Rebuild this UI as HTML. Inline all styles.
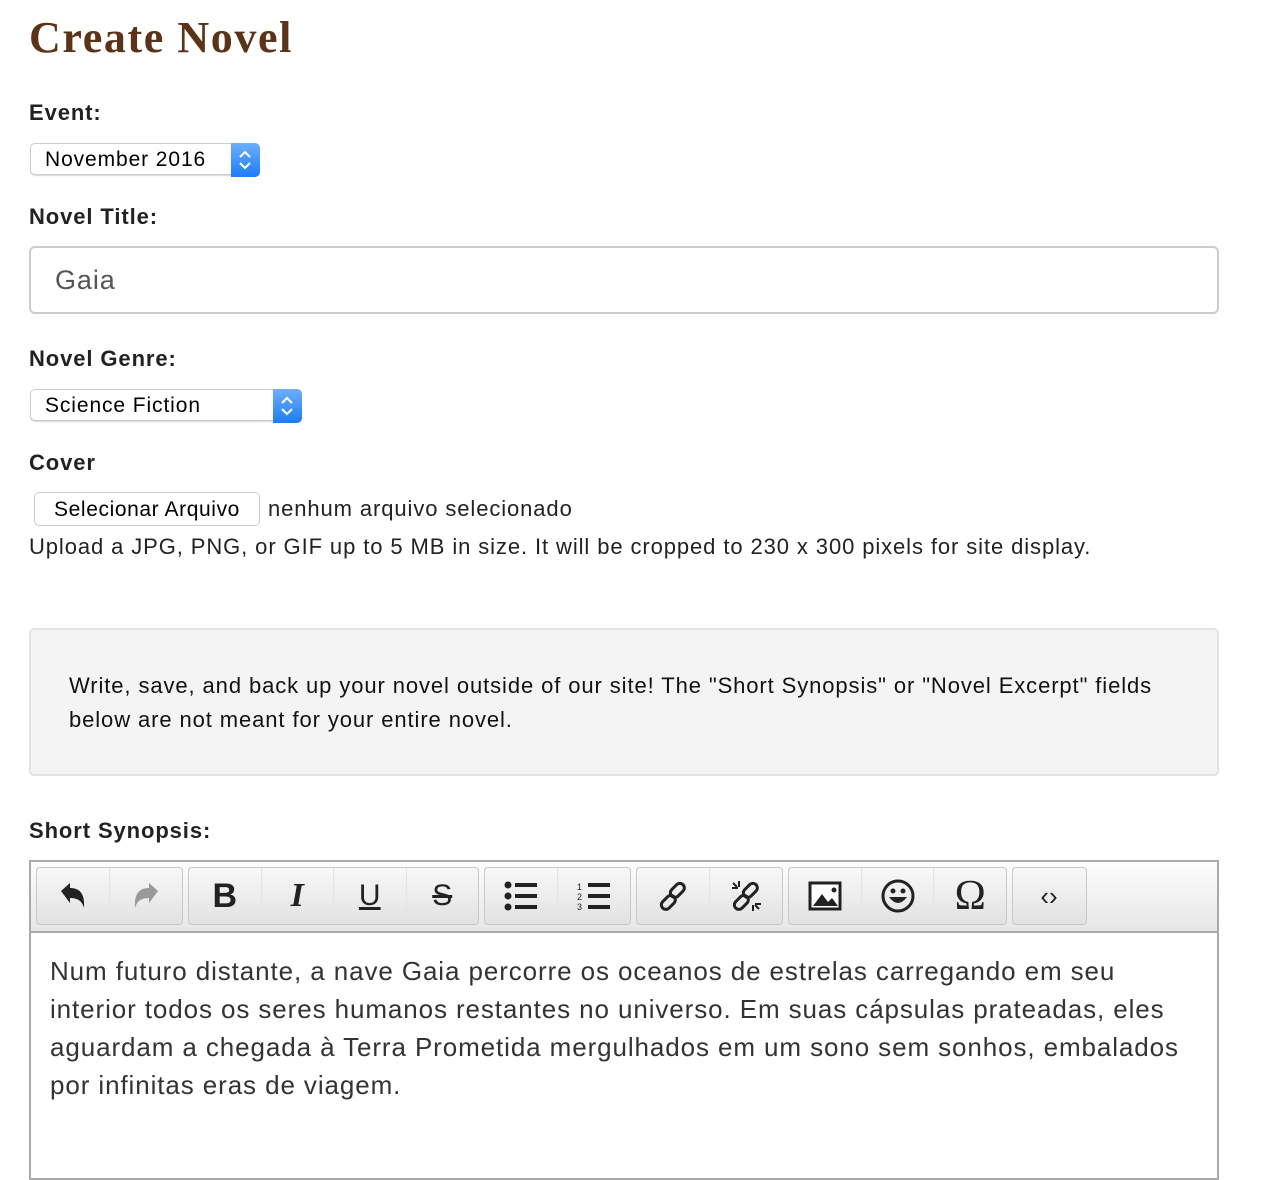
<!DOCTYPE html>
<html><head><style>
body{margin:0;background:#fff;font-family:"Liberation Sans",Arial,sans-serif;color:#222;width:1264px;height:1140px;overflow:hidden;position:relative;letter-spacing:0.9px}
.a{position:absolute}
h1{position:absolute;left:29px;top:12px;margin:0;font-family:"Liberation Serif",serif;font-weight:bold;font-size:44px;letter-spacing:1.6px;color:#5b3318}
.lbl{position:absolute;left:29px;font-weight:bold;font-size:22px;color:#222}
.sel{position:absolute;height:32px;border:1px solid #ccc;border-radius:5px;background:#fff;box-shadow:0 1px 1px rgba(0,0,0,.15);font-size:21px;line-height:32px;padding-left:14px;box-sizing:border-box;color:#000}
.sel .ar{position:absolute;right:-1px;top:-1px;width:29px;height:34px;background:linear-gradient(#6eaefc,#1c7cf8);border-radius:0 5px 5px 0}
.tb{position:absolute;top:867px;height:58px;border:1px solid #c8c8c8;border-radius:4px;background:linear-gradient(#f8f8f8,#e2e2e2);box-sizing:border-box;display:flex;letter-spacing:0}
.tb div{width:72px;height:56px;border-right:1px solid #e4e4e4;display:flex;align-items:center;justify-content:center;font-size:34px;color:#222}
.tb div:last-child{border-right:none}
</style></head><body>
<h1>Create Novel</h1>
<div class="lbl" style="top:100px">Event:</div>
<div class="sel" style="left:30px;top:143px;width:230px">November 2016<div class="ar"><svg width="29" height="34"><path d="M9 14l5-5 5 5M9 20l5 5 5-5" stroke="#fff" stroke-width="2" fill="none"/></svg></div></div>
<div class="lbl" style="top:204px">Novel Title:</div>
<div class="a" style="left:29px;top:246px;width:1190px;height:68px;border:2px solid #ccc;border-radius:6px;box-sizing:border-box;font-size:27px;line-height:64px;padding-left:24px;color:#555">Gaia</div>
<div class="lbl" style="top:346px">Novel Genre:</div>
<div class="sel" style="left:30px;top:389px;width:272px">Science Fiction<div class="ar"><svg width="29" height="34"><path d="M9 14l5-5 5 5M9 20l5 5 5-5" stroke="#fff" stroke-width="2" fill="none"/></svg></div></div>
<div class="lbl" style="top:450px">Cover</div>
<div class="a" style="left:34px;top:492px;width:226px;height:34px;border:1px solid #ccc;border-radius:5px;box-sizing:border-box;font-size:21px;line-height:34px;text-align:center;color:#000;letter-spacing:0.6px">Selecionar Arquivo</div>
<div class="a" style="left:268px;top:496px;font-size:22px;color:#222">nenhum arquivo selecionado</div>
<div class="a" style="left:29px;top:534px;font-size:22px;color:#222">Upload a JPG, PNG, or GIF up to 5 MB in size. It will be cropped to 230 x 300 pixels for site display.</div>
<div class="a" style="left:29px;top:628px;width:1190px;height:148px;border:2px solid #e3e3e3;border-radius:5px;background:#f4f4f4;box-sizing:border-box;padding:39px 50px 0 38px;font-size:22px;line-height:34px;color:#111">Write, save, and back up your novel outside of our site! The "Short Synopsis" or "Novel Excerpt" fields below are not meant for your entire novel.</div>
<div class="lbl" style="top:818px">Short Synopsis:</div>
<div class="a" style="left:29px;top:860px;width:1190px;height:320px;border:2px solid #aaa;box-sizing:border-box;background:#fff"></div>
<div class="a" style="left:31px;top:862px;width:1186px;height:69px;background:linear-gradient(#fdfdfd,#e6e6e6);border-bottom:2px solid #aaa"></div>
<div class="tb" style="left:36px;width:147px"><div><svg width="30" height="30"><path d="M3 10l9-8v5c10 0 15 6 14 20-2-7-6-10-14-10v5z" fill="#222"/></svg></div><div><svg width="30" height="30"><path d="M27 10l-9-8v5c-10 0-15 6-14 20 2-7 6-10 14-10v5z" fill="#999"/></svg></div></div>
<div class="tb" style="left:188px;width:291px"><div style="font-weight:bold">B</div><div style="font-family:'Liberation Serif';font-style:italic;font-weight:bold">I</div><div style="text-decoration:underline;font-size:30px">U</div><div style="text-decoration:line-through;font-size:30px">S</div></div>
<div class="tb" style="left:484px;width:147px"><div><svg width="34" height="30"><g fill="#222"><circle cx="4" cy="4" r="3.5"/><circle cx="4" cy="15" r="3.5"/><circle cx="4" cy="26" r="3.5"/><rect x="11" y="2" width="22" height="4"/><rect x="11" y="13" width="22" height="4"/><rect x="11" y="24" width="22" height="4"/></g></svg></div><div><svg width="34" height="30"><g fill="#222"><text x="0" y="9" font-size="9">1</text><text x="0" y="19" font-size="9">2</text><text x="0" y="29" font-size="9">3</text><rect x="11" y="2" width="22" height="4"/><rect x="11" y="13" width="22" height="4"/><rect x="11" y="24" width="22" height="4"/></g></svg></div></div>
<div class="tb" style="left:636px;width:147px"><div><svg width="34" height="34"><g stroke="#222" stroke-width="3" fill="none"><rect x="17" y="3" width="9" height="16" rx="4.5" transform="rotate(45 21 11)"/><rect x="8" y="15" width="9" height="16" rx="4.5" transform="rotate(45 12 23)"/></g></svg></div><div><svg width="34" height="34"><g stroke="#222" stroke-width="3" fill="none"><rect x="17" y="3" width="9" height="16" rx="4.5" transform="rotate(45 21 11)"/><rect x="8" y="15" width="9" height="16" rx="4.5" transform="rotate(45 12 23)"/></g><g stroke="#222" stroke-width="2"><path d="M10 2v6M3 9h6M24 26v6M26 25h6M4 4l4 4M30 30l-4-4"/></g></svg></div></div>
<div class="tb" style="left:788px;width:219px"><div><svg width="34" height="30"><rect x="2" y="2" width="30" height="26" fill="#fff" stroke="#222" stroke-width="3"/><path d="M5 25l9-12 6 8 4-4 6 8z" fill="#222"/><circle cx="26" cy="9" r="2.5" fill="#222"/></svg></div><div><svg width="36" height="36"><circle cx="18" cy="18" r="15" fill="none" stroke="#222" stroke-width="3"/><circle cx="13" cy="13" r="2.5" fill="#222"/><circle cx="23" cy="13" r="2.5" fill="#222"/><path d="M9 19q9 12 18 0z" fill="#222"/></svg></div><div style="font-family:'Liberation Serif';font-size:42px">Ω</div></div>
<div class="tb" style="left:1012px;width:75px"><div style="font-size:26px">‹›</div></div>
<div class="a" style="left:50px;top:952px;width:1145px;font-size:26px;line-height:38px;color:#333;letter-spacing:0.9px">Num futuro distante, a nave Gaia percorre os oceanos de estrelas carregando em seu interior todos os seres humanos restantes no universo. Em suas cápsulas prateadas, eles aguardam a chegada à Terra Prometida mergulhados em um sono sem sonhos, embalados por infinitas eras de viagem.</div>
</body></html>
